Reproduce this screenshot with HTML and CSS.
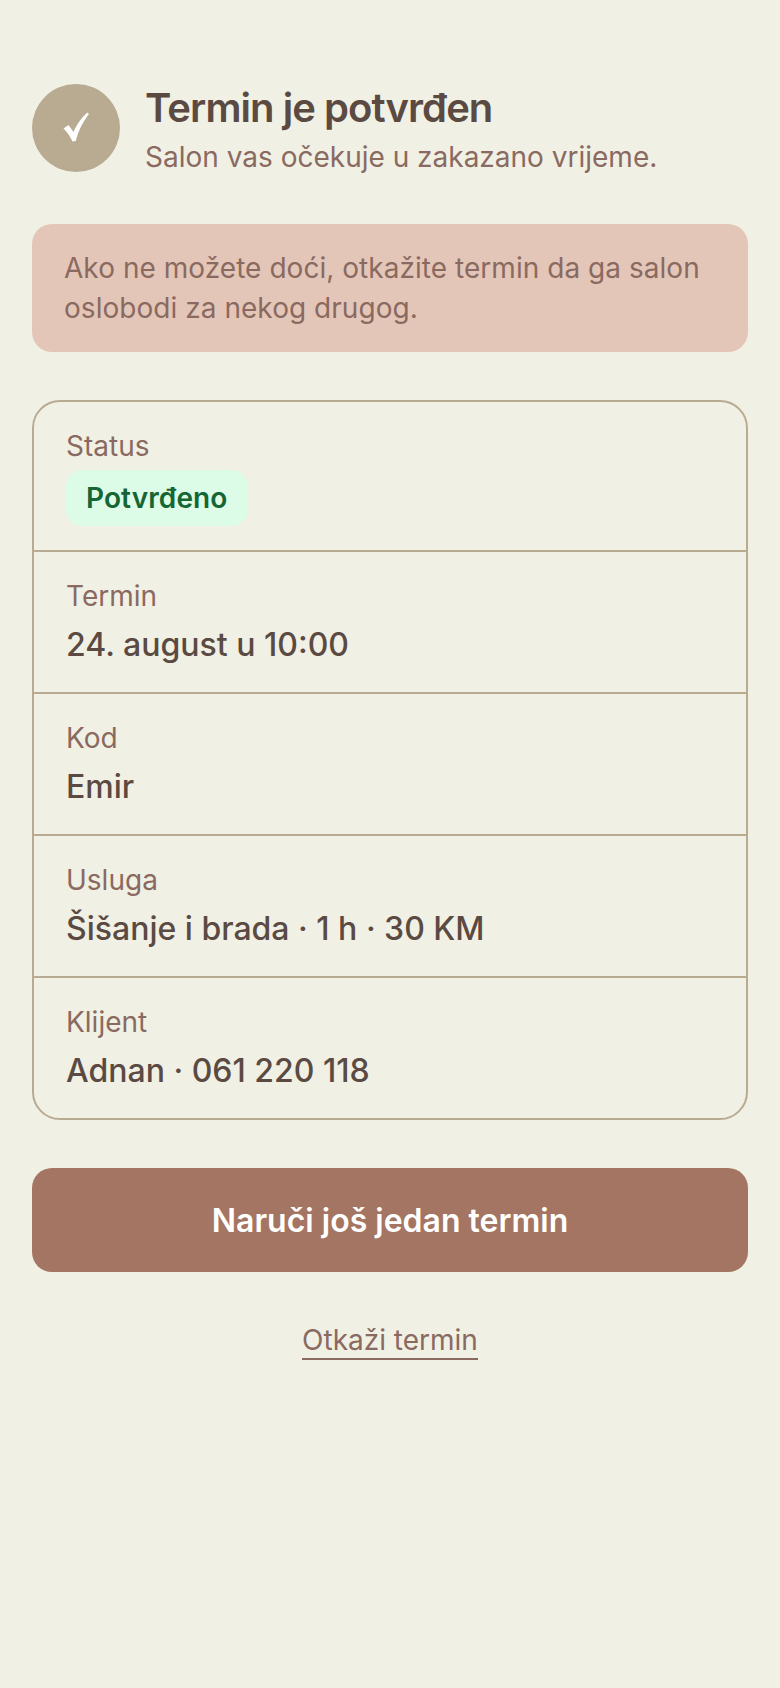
FILE: index.html
```html
<!DOCTYPE html>
<html lang="bs">
<head>
    <meta charset="UTF-8">
    <meta name="viewport" content="width=device-width, initial-scale=1.0">
    <title>Termin je potvrđen</title>
    <link rel="stylesheet" href="styles.css">
</head>
<body>
    <div class="container">
        <div class="header">
            <div class="check-circle">
                <svg class="check-icon" width="26" height="30" viewBox="0 0 26 30"><path d="M0.5 16.5 L5.5 13 L10.5 20 C14 12 19 5 24.5 0.5 L26 2 C20.5 9 15.5 18 12.8 29 L9.5 29.5 C7.5 25 4.5 20.5 0.5 16.5 Z" fill="#fff"/></svg>
            </div>
            <div class="header-text">
                <h1>Termin je potvrđen</h1>
                <p>Salon vas očekuje u zakazano vrijeme.</p>
            </div>
        </div>

        <div class="alert">Ako ne možete doći, otkažite termin da ga salon oslobodi za nekog drugog.</div>

        <div class="card">
            <div class="row status-row">
                <div class="label">Status</div>
                <span class="badge">Potvrđeno</span>
            </div>
            <div class="row">
                <div class="label">Termin</div>
                <div class="value">24. august u 10:00</div>
            </div>
            <div class="row">
                <div class="label">Kod</div>
                <div class="value">Emir</div>
            </div>
            <div class="row">
                <div class="label">Usluga</div>
                <div class="value">Šišanje i brada · 1 h · 30 KM</div>
            </div>
            <div class="row">
                <div class="label">Klijent</div>
                <div class="value">Adnan · 061 220 118</div>
            </div>
        </div>

        <a class="button" href="#">Naruči još jedan termin</a>
        <div class="cancel"><a href="#">Otkaži termin</a></div>
    </div>
</body>
</html>
```

FILE: styles.css
```css
body {
    margin: 0;
    min-height: 1688px;
    font-family: Inter, sans-serif;
    background-color: #f1f0e5;
    color: #5a4a42;
}

.container {
    padding: 84px 32px 0;
}

.header {
    display: flex;
    align-items: flex-start;
    gap: 25px;
}

.check-circle {
    width: 88px;
    height: 88px;
    flex-shrink: 0;
    display: flex;
    align-items: center;
    justify-content: center;
    border-radius: 50%;
    background-color: #b8ab91;
}

.check-icon {
    margin-bottom: 2px;
}

.header-text h1 {
    margin: 0;
    font-size: 40px;
    font-weight: 600;
    line-height: 48px;
    letter-spacing: -0.94px;
}

.header-text p {
    margin: 5px 0 0;
    font-size: 28px;
    line-height: 40px;
    color: #8a6a60;
}

.alert {
    margin-top: 47px;
    padding: 24px 32px;
    border-radius: 20px;
    background-color: #e4c6b9;
    color: #8a6a60;
    font-size: 28px;
    line-height: 40px;
    letter-spacing: 0.04px;
}

.card {
    margin-top: 48px;
    border: 2px solid #b8ab91;
    border-radius: 28px;
}

.row {
    padding: 26px 32px 25px;
    border-bottom: 2px solid #b8ab91;
}

.row:last-child {
    border-bottom: 0;
}

.status-row {
    padding-bottom: 24px;
}

.label {
    font-size: 28px;
    line-height: 36px;
    color: #8a6a60;
}

.value {
    margin-top: 9px;
    font-size: 32px;
    font-weight: 500;
    line-height: 44px;
}

.badge {
    display: inline-block;
    margin-top: 6px;
    padding: 8px 21px 8px 20px;
    border-radius: 16px;
    background-color: #dcfce7;
    color: #166534;
    font-size: 28px;
    font-weight: 600;
    line-height: 40px;
    letter-spacing: 0.1px;
    vertical-align: top;
}

.button {
    display: block;
    margin-top: 48px;
    padding: 31px 0 29px;
    border-radius: 20px;
    background-color: #a47562;
    color: #fff;
    text-align: center;
    text-decoration: none;
    font-size: 32px;
    font-weight: 600;
    line-height: 44px;
}

.cancel {
    margin-top: 50px;
    text-align: center;
}

.cancel a {
    display: inline-block;
    color: #8a6a60;
    text-decoration: none;
    font-size: 28px;
    line-height: 36px;
    border-bottom: 2px solid #8a6a60;
}
```
